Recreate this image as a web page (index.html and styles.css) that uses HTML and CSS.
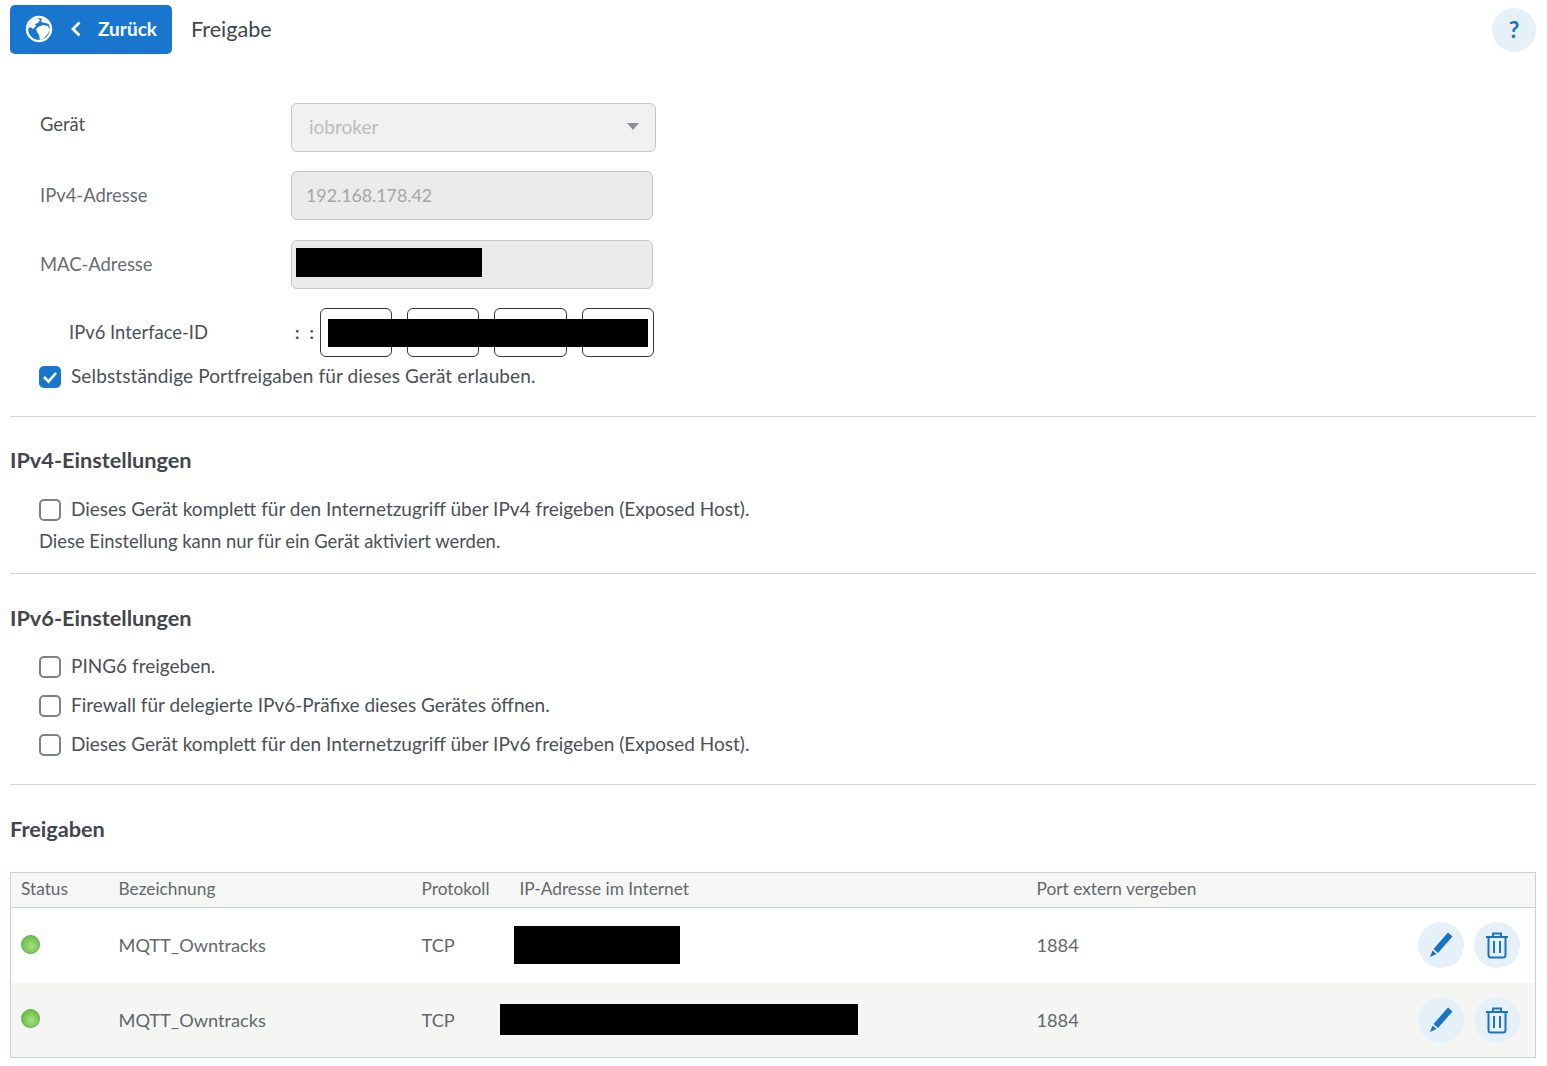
FILE: index.html
```html
<!DOCTYPE html>
<html lang="de">
<head>
<meta charset="utf-8">
<title>Freigabe</title>
<link rel="stylesheet" href="styles.css">
</head>
<body>
<header class="topbar">
  <a class="back" href="#">
    <svg class="globe" width="28" height="28" viewBox="0 0 28 28"><circle cx="14" cy="14" r="12" fill="none" stroke="#fff" stroke-width="2.4"/><path fill="#fff" d="M3 13C4 8 7 4 12 3l3 2-2 3-3 1 1 2-3 3-3-2-2 2zM13 12l5-2 5 1 2 4-3 5-4 4-3 1-1-5-2-3-1-3zM17 3l6 4 1 2-4-1-4-1z"/></svg>
    <svg class="chev" width="12" height="16" viewBox="0 0 12 16"><path d="M9.500 1.500 3 8l6.500 6.500" fill="none" stroke="#fff" stroke-width="2.800"/></svg>
    <span>Zurück</span>
  </a>
  <h1 class="title">Freigabe</h1>
  <button class="help" type="button">?</button>
</header>

<section class="form">
  <div class="field field-select">
    <span class="label label-dark">Gerät</span>
    <div class="select"><span>iobroker</span><i class="caret"></i></div>
  </div>
  <div class="field field-wide">
    <span class="label">IPv4-Adresse</span>
    <div class="input">192.168.178.42</div>
  </div>
  <div class="field">
    <span class="label">MAC-Adresse</span>
    <div class="input input-mask"><i class="mask mask-mac"></i></div>
  </div>
  <div class="field field-v6">
    <span class="label label-dark label-v6">IPv6 Interface-ID</span>
    <span class="colons">: :</span>
    <div class="v6">
      <div class="v6-box"></div><div class="v6-box"></div><div class="v6-box v6-box-w"></div><div class="v6-box"></div>
      <i class="mask mask-v6"></i>
    </div>
  </div>
  <label class="check check-wide"><span class="box on"><svg width="16" height="14" viewBox="0 0 16 14"><path d="M2 7l4.500 4.500L14 3" fill="none" stroke="#fff" stroke-width="2.600"/></svg></span><span>Selbstständige Portfreigaben für dieses Gerät erlauben.</span></label>
</section>
<hr class="rule rule-1">

<h2 class="heading">IPv4-Einstellungen</h2>
<label class="check check-indent"><span class="box"></span><span>Dieses Gerät komplett für den Internetzugriff über IPv4 freigeben (Exposed Host).</span></label>
<p class="note">Diese Einstellung kann nur für ein Gerät aktiviert werden.</p>
<hr class="rule rule-2">

<h2 class="heading heading-v6">IPv6-Einstellungen</h2>
<div class="checks">
  <label class="check check-indent"><span class="box"></span><span>PING6 freigeben.</span></label>
  <label class="check check-indent"><span class="box"></span><span>Firewall für delegierte IPv6-Präfixe dieses Gerätes öffnen.</span></label>
  <label class="check check-indent"><span class="box"></span><span>Dieses Gerät komplett für den Internetzugriff über IPv6 freigeben (Exposed Host).</span></label>
</div>
<hr class="rule rule-3">

<h2 class="heading heading-f">Freigaben</h2>
<table class="shares">
  <colgroup><col class="c1"><col class="c2"><col class="c3"><col class="c4"><col class="c5"><col class="c6"></colgroup>
  <thead>
    <tr><th>Status</th><th>Bezeichnung</th><th>Protokoll</th><th>IP-Adresse im Internet</th><th>Port extern vergeben</th><th></th></tr>
  </thead>
  <tbody>
    <tr>
      <td><span class="led"></span></td><td>MQTT_Owntracks</td><td>TCP</td>
      <td class="ipcell"><i class="mask mask-ip1"></i></td><td>1884</td>
      <td class="actions">
        <button class="round" type="button"><svg width="26" height="28" viewBox="0 0 26 28"><path fill="#1b73c4" d="M20 1.500l4.500 4L10 22l-4.500-4zM4.500 19.500l4 3.500L2 26z"/></svg></button>
        <button class="round" type="button"><svg width="24" height="28" viewBox="0 0 24 28"><path fill="none" stroke="#1b73c4" stroke-width="2" d="M1 6h22M8 6V2.500h8V6M3.500 6v18a2.500 2.500 0 0 0 2.500 2.500h12a2.500 2.500 0 0 0 2.500-2.500V6M9 10v12M15 10v12"/></svg></button>
      </td>
    </tr>
    <tr>
      <td><span class="led"></span></td><td>MQTT_Owntracks</td><td>TCP</td>
      <td class="ipcell"><i class="mask mask-ip2"></i></td><td>1884</td>
      <td class="actions">
        <button class="round" type="button"><svg width="26" height="28" viewBox="0 0 26 28"><path fill="#1b73c4" d="M20 1.500l4.500 4L10 22l-4.500-4zM4.500 19.500l4 3.500L2 26z"/></svg></button>
        <button class="round" type="button"><svg width="24" height="28" viewBox="0 0 24 28"><path fill="none" stroke="#1b73c4" stroke-width="2" d="M1 6h22M8 6V2.500h8V6M3.500 6v18a2.500 2.500 0 0 0 2.500 2.500h12a2.500 2.500 0 0 0 2.500-2.500V6M9 10v12M15 10v12"/></svg></button>
      </td>
    </tr>
  </tbody>
</table>
</body>
</html>
```
FILE: styles.css
```css
* { box-sizing: border-box; }
html, body { margin: 0; padding: 0; }
body {
  padding: 5px 11px 0 10px;
  background: #fff;
  color: #4a5057;
  font-family: "Lato", "Noto Sans", sans-serif;
  font-size: 19px;
  line-height: 24px;
}
.topbar { display: flex; align-items: center; height: 49px; }
.back {
  display: flex; align-items: center; width: 162px; height: 49px;
  padding-left: 15px; padding-bottom: 1px; border-radius: 5px; background: #1976cf;
  color: #fff; font-weight: 700; font-size: 19px; text-decoration: none;
}
.chev { margin: 0 0 0 17px; }
.back span { margin-left: 16px; padding-bottom: 1px; }
.title { margin: 0 0 0 19px; padding-bottom: 2px; font-size: 21.600px; font-weight: 400; color: #3f464e; }
.help {
  margin-left: auto; margin-top: 1px; width: 44px; height: 44px; border: 0; border-radius: 50%;
  background: #e6f0f9; color: #1b73b8; font: 700 23px "Lato", sans-serif; padding: 0 0 2px;
}
.form { margin-top: 49px; padding-left: 29px; }
.field { display: flex; align-items: center; height: 49px; margin-bottom: 19px; font-size: 18.400px; }
.field-wide { margin-bottom: 20px; }
.field-v6 { margin-bottom: 8px; }
.label { width: 252px; flex: none; padding-left: 1px; padding-bottom: 2px; color: #666c73; }
.label-dark { color: #4a5057; }
.field-select .label { position: relative; top: -3px; }
.label-v6 { width: 255px; padding-left: 30px; margin-right: -1px; }
.select, .input { height: 49px; border: 1px solid #c4c6c8; border-radius: 6px; display: flex; align-items: center; padding-bottom: 2px; font-size: 19px; }
.select { width: 365px; background: #f1f1f1; padding-left: 17px; padding-right: 16px; justify-content: space-between; color: #bcbcbc; }
.caret { width: 0; height: 0; border: 6.500px solid transparent; border-top: 7px solid #8b8f94; border-bottom: 0; }
.input { width: 362px; background: #ebebeb; padding-left: 14px; color: #a4a6a8; font-size: 17.800px; }
.input-mask { position: relative; }
.colons { width: 27px; flex: none; letter-spacing: 3px; padding-left: 2px; color: #3f464e; font-weight: 700; font-size: 17px; }
.v6 { position: relative; display: flex; gap: 15px; }
.v6-box { width: 72px; height: 49px; border: 1px solid #33383d; border-radius: 6px; background: #fff; }
.v6-box-w { width: 73px; }
.mask { position: absolute; background: #000; display: block; }
.mask-mac { left: 4px; top: 7px; width: 186px; height: 29px; }
.mask-v6 { left: 8px; top: 11px; width: 320px; height: 28px; }
.check { display: flex; align-items: center; height: 24px; gap: 10px; color: #4a5057; }
.check > span:last-child { padding-bottom: 2px; }
.check-wide { letter-spacing: .12px; }
.check-indent { margin-left: 29px; }
.box { width: 22px; height: 22px; flex: none; border: 2px solid #7c8186; border-radius: 5px; background: #fff; display: flex; align-items: center; justify-content: center; padding: 0 !important; }
.box.on { border: 0; background: #1976cf; }
.rule { margin: 0; border: 0; border-top: 1px solid #d3d5d6; }
.rule-1 { margin-top: 27px; }
.heading { margin: 0; font-size: 21.700px; font-weight: 700; color: #3f464e; line-height: 26px; }
.rule-1 + .heading { margin-top: 30px; margin-bottom: 25px; }
.note { margin: 7px 0 0 29px; height: 24px; font-size: 18.400px; }
.rule-2 { margin-top: 20px; }
.heading-v6 { margin-top: 31px; margin-bottom: 24px; }
.checks { display: flex; flex-direction: column; gap: 15px; }
.rule-3 { margin-top: 27px; }
.heading-f { margin-top: 31px; margin-bottom: 30px; }
.shares { width: 100%; table-layout: fixed; border-collapse: collapse; border: 1px solid #c3d2d8; font-size: 18.200px; }
.c1 { width: 98px; } .c2 { width: 303px; } .c3 { width: 98px; } .c4 { width: 517px; } .c5 { width: 301px; }
.shares th { height: 35px; padding: 0 0 2px 10px; text-align: left; font-weight: 400; font-size: 17.300px; color: #61676d; background: #f6f7f5; border-bottom: 1px solid #c3d2d8; }
.shares td { height: 75px; padding: 0 0 0 10px; color: #61676d; }
.shares tbody tr:nth-child(2) td { background: #f5f6f4; }
.led { display: block; width: 19px; height: 19px; margin-top: -2px; border-radius: 50%; border: 1px solid #6aa84f; background: radial-gradient(circle at 55% 60%, #a6e07f, #6cc04a 70%); }
.ipcell { position: relative; }
.mask-ip1 { left: 4px; top: 18px; width: 166px; height: 38px; }
.mask-ip2 { left: -10px; top: 21px; width: 358px; height: 31px; }
.actions { text-align: right; padding-right: 15px !important; white-space: nowrap; }
.round { width: 46px; height: 46px; margin-left: 5px; padding: 0; border: 0; border-radius: 50%; background: #e6f0f9; display: inline-flex; align-items: center; justify-content: center; vertical-align: middle; }
```
